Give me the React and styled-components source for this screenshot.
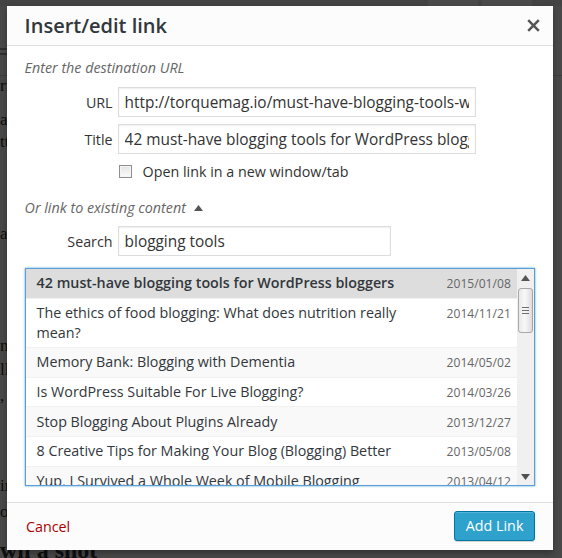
import React from 'react';
import styled, { createGlobalStyle } from 'styled-components';

const Global = createGlobalStyle`
  html, body { margin: 0; padding: 0; }
  body { width: 562px; height: 558px; overflow: hidden; font-family: "Open Sans", "DejaVu Sans", sans-serif; }
  * { box-sizing: border-box; }
`;

const Screen = styled.div`
  position: relative;
  width: 562px;
  height: 558px;
  overflow: hidden;
  background: #f1f1f1;
`;

/* ---------- page behind the modal ---------- */
const PageBehind = styled.div`
  display: flex;
  flex-direction: column;
  font-family: "Liberation Serif", serif;
  color: #333;
  font-size: 17px;
  line-height: 20px;
`;

const TopBar = styled.div`
  height: 6px;
  background: #e2e2e2;
  display: flex;
  justify-content: flex-end;
  gap: 4px;
  padding-right: 30px;
`;

const TopBarTab = styled.div`
  width: 50px;
  height: 6px;
  background: #f7f7f7;
`;

const MenuLines = styled.div`
  margin-top: 42px;
  width: 8px;
  height: 7px;
  border-top: 2px solid #999;
  border-bottom: 2px solid #999;
`;

const Rule = styled.div`
  margin-top: 20px;
  height: 1px;
  background: #c9c9c9;
`;

const BehindLine = styled.div`
  margin-top: ${(p) => p.$gap || 0}px;
  white-space: nowrap;
`;

const BehindHeading = styled.div`
  margin-top: ${(p) => p.$gap || 0}px;
  font-size: 24px;
  font-weight: 700;
  line-height: 28px;
  white-space: nowrap;
`;

/* ---------- modal ---------- */
const Overlay = styled.div`
  position: absolute;
  inset: 0;
  background: rgba(0, 0, 0, 0.7);
  padding: 6px 9px 8px 7px;
  display: flex;
`;

const Dialog = styled.div`
  flex: 1;
  background: #fff;
  box-shadow: 0 3px 6px rgba(0, 0, 0, 0.3);
  display: flex;
  flex-direction: column;
  color: #333;
`;

const Header = styled.div`
  height: 40px;
  background: #fcfcfc;
  border-bottom: 1px solid #dfdfdf;
  display: flex;
  align-items: center;
  justify-content: space-between;
  padding-left: 17.6px;
`;

const Title = styled.h1`
  margin: 0;
  font-size: 20px;
  font-weight: 600;
  color: #32373c;
  line-height: 39px;
`;

const CloseButton = styled.button`
  width: 40px;
  height: 39px;
  border: 0;
  background: transparent;
  padding: 0;
  display: flex;
  align-items: center;
  justify-content: center;
  color: #555;
  cursor: pointer;
`;

const Body = styled.div`
  flex: 1;
  min-height: 0;
  display: flex;
  flex-direction: column;
  padding: 12px 17.6px 16px;
`;

const HowTo = styled.p`
  margin: ${(p) => p.$mt || 0}px 0 0;
  font-size: 14.3px;
  line-height: 20px;
  font-style: italic;
  color: #666;
  display: flex;
  align-items: center;
  gap: 8px;
`;

const FieldRow = styled.label`
  display: flex;
  align-items: center;
  margin-top: ${(p) => p.$mt || 0}px;
`;

const FieldLabel = styled.span`
  width: 93.5px;
  padding-right: 5.5px;
  text-align: right;
  font-size: 14.3px;
  color: #333;
  flex-shrink: 0;
`;

const TextInput = styled.input`
  width: ${(p) => p.$w}px;
  height: 30px;
  border: 1px solid #ddd;
  box-shadow: inset 0 1px 2px rgba(0, 0, 0, 0.07);
  background: #fff;
  padding: 0 5.5px;
  margin: 0;
  font-family: "Open Sans", sans-serif;
  font-size: 15.4px;
  color: #333;
  outline: none;
  border-radius: 0;
`;

const CheckRow = styled.label`
  display: flex;
  align-items: center;
  margin-top: 7px;
  padding-left: 94px;
  height: 20px;
  font-size: 14.3px;
  color: #333;
  gap: 11px;
`;

const CheckBox = styled.span`
  width: 13px;
  height: 13px;
  border: 1px solid #8f8f8f;
  background: linear-gradient(#e4e4e4, #fbfbfb);
  box-shadow: inset 0 0 0 1px #f4f4f4;
  flex-shrink: 0;
`;

const Results = styled.div`
  flex: 1;
  min-height: 0;
  margin-top: 12px;
  border: 1px solid #5b9dd9;
  box-shadow: 0 0 2px rgba(30, 140, 190, 0.8);
  display: flex;
  overflow: hidden;
`;

const ResultList = styled.ul`
  flex: 1;
  margin: 0;
  padding: 0;
  list-style: none;
  overflow: hidden;
`;

const Item = styled.li`
  display: flex;
  align-items: flex-start;
  justify-content: space-between;
  padding: 4.3px 6.6px 4.3px 11px;
  border-bottom: 1px solid #f1f1f1;
  background: ${(p) => (p.$selected ? '#ddd' : p.$alt ? '#f9f9f9' : '#fff')};
  color: #32373c;
  font-size: 14.3px;
  line-height: 20px;
`;

const ItemTitle = styled.span`
  width: calc(100% - 90px);
  font-weight: ${(p) => (p.$selected ? 600 : 400)};
`;

const ItemDate = styled.span`
  font-size: 12.1px;
  line-height: 19px;
  margin-top: 1px;
  color: #666;
`;

const ScrollTrack = styled.div`
  width: 17px;
  flex-shrink: 0;
  background: #f0f0f0;
  display: flex;
  flex-direction: column;
  align-items: center;
`;

const ScrollArrow = styled.div`
  height: 17px;
  width: 17px;
  display: flex;
  align-items: center;
  justify-content: center;
`;

const ScrollThumb = styled.div`
  margin-top: 2px;
  width: 15px;
  height: 45px;
  border: 1px solid #a8a8a8;
  border-radius: 3px;
  background: linear-gradient(to right, #e9e9e9, #f8f8f8 45%, #dcdcdc);
  display: flex;
  flex-direction: column;
  align-items: center;
  justify-content: center;
  gap: 2px;
`;

const Grip = styled.span`
  width: 7px;
  height: 1px;
  background: #6f6f6f;
`;

const ScrollSpacer = styled.div`
  flex: 1;
`;

const Footer = styled.div`
  height: 48px;
  background: #fcfcfc;
  border-top: 1px solid #dfdfdf;
  display: flex;
  align-items: center;
  justify-content: space-between;
  padding: 0 17.6px 0 19px;
`;

const CancelLink = styled.a`
  color: #a00;
  font-size: 14.3px;
  text-decoration: none;
  cursor: pointer;
`;

const PrimaryButton = styled.button`
  height: 30px;
  padding: 0 11px;
  border: 1px solid #0074a2;
  border-radius: 3px;
  background: #2ea2cc;
  color: #fff;
  font-family: "Open Sans", sans-serif;
  font-size: 14.3px;
  box-shadow: inset 0 1px 0 rgba(120, 200, 230, 0.5), 0 1px 0 rgba(0, 0, 0, 0.15);
  cursor: pointer;
  margin-top: -2px;
`;

const items = [
  { title: '42 must-have blogging tools for WordPress bloggers', date: '2015/01/08', selected: true },
  { title: 'The ethics of food blogging: What does nutrition really mean?', date: '2014/11/21' },
  { title: 'Memory Bank: Blogging with Dementia', date: '2014/05/02', alt: true },
  { title: 'Is WordPress Suitable For Live Blogging?', date: '2014/03/26' },
  { title: 'Stop Blogging About Plugins Already', date: '2013/12/27', alt: true },
  { title: '8 Creative Tips for Making Your Blog (Blogging) Better', date: '2013/05/08' },
  { title: 'Yup, I Survived a Whole Week of Mobile Blogging', date: '2013/04/12', alt: true },
];

const CloseIcon = () => (
  <svg width="25" height="25" viewBox="0 0 20 20" fill="currentColor" aria-hidden="true">
    <path d="M14.95 6.46L11.41 10l3.54 3.54-1.41 1.41L10 11.42l-3.53 3.53-1.42-1.42L8.58 10 5.05 6.47l1.42-1.42L10 8.58l3.54-3.53z" />
  </svg>
);

const Triangle = ({ down }) => (
  <svg width="9" height="6" viewBox="0 0 9 6" aria-hidden="true">
    <path d={down ? 'M0 0h9L4.5 6z' : 'M4.5 0L9 6H0z'} fill={down ? '#505050' : '#555'} />
  </svg>
);

export default function App() {
  return (
    <>
      <Global />
      <Screen>
        <PageBehind>
          <TopBar>
            <TopBarTab />
            <TopBarTab />
          </TopBar>
          <MenuLines />
          <Rule />
          <BehindLine $gap={0}>rmation</BehindLine>
          <BehindLine $gap={14}>a</BehindLine>
          <BehindLine $gap={2}>ttle</BehindLine>
          <BehindLine $gap={72}>a</BehindLine>
          <BehindLine $gap={92}>nd</BehindLine>
          <BehindLine $gap={4}>ll</BehindLine>
          <BehindLine $gap={6}>,</BehindLine>
          <BehindLine $gap={70}>in</BehindLine>
          <BehindLine $gap={6}>o</BehindLine>
          <BehindHeading $gap={14}>wn a shot</BehindHeading>
        </PageBehind>

        <Overlay>
          <Dialog role="dialog" aria-labelledby="link-title">
            <Header>
              <Title id="link-title">Insert/edit link</Title>
              <CloseButton aria-label="Close">
                <CloseIcon />
              </CloseButton>
            </Header>

            <Body>
              <HowTo>Enter the destination URL</HowTo>
              <FieldRow $mt={9}>
                <FieldLabel>URL</FieldLabel>
                <TextInput $w={357.6} readOnly value="http://torquemag.io/must-have-blogging-tools-wordpress-bloggers/" />
              </FieldRow>
              <FieldRow $mt={7}>
                <FieldLabel>Title</FieldLabel>
                <TextInput $w={357.6} readOnly value="42 must-have blogging tools for WordPress bloggers" />
              </FieldRow>
              <CheckRow>
                <CheckBox />
                Open link in a new window/tab
              </CheckRow>

              <HowTo $mt={17}>
                Or link to existing content <Triangle />
              </HowTo>
              <FieldRow $mt={8}>
                <FieldLabel>Search</FieldLabel>
                <TextInput $w={273} readOnly value="blogging tools" />
              </FieldRow>

              <Results>
                <ResultList>
                  {items.map((it) => (
                    <Item key={it.title} $selected={it.selected} $alt={it.alt}>
                      <ItemTitle $selected={it.selected}>{it.title}</ItemTitle>
                      <ItemDate>{it.date}</ItemDate>
                    </Item>
                  ))}
                </ResultList>
                <ScrollTrack>
                  <ScrollArrow>
                    <Triangle />
                  </ScrollArrow>
                  <ScrollThumb>
                    <Grip />
                    <Grip />
                    <Grip />
                  </ScrollThumb>
                  <ScrollSpacer />
                  <ScrollArrow>
                    <Triangle down />
                  </ScrollArrow>
                </ScrollTrack>
              </Results>
            </Body>

            <Footer>
              <CancelLink>Cancel</CancelLink>
              <PrimaryButton>Add Link</PrimaryButton>
            </Footer>
          </Dialog>
        </Overlay>
      </Screen>
    </>
  );
}
